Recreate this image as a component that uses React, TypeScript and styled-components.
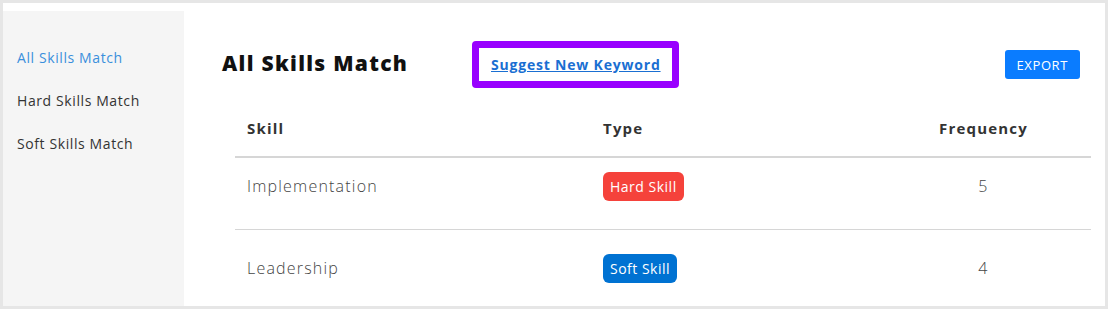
import React from 'react';
import styled, { createGlobalStyle } from 'styled-components';

const GlobalStyle = createGlobalStyle`
  html, body {
    margin: 0;
    padding: 0;
    background: #ffffff;
  }
  body {
    font-family: "Open Sans", "Liberation Sans", sans-serif;
    color: #333333;
  }
`;

const Frame = styled.div`
  box-sizing: border-box;
  width: 1108px;
  height: 309px;
  border: 3px solid #e6e6e6;
  padding-top: 8px;
  overflow: hidden;
  display: flex;
  background: #ffffff;
`;

const Sidebar = styled.nav`
  width: 181px;
  flex-shrink: 0;
  background: #f5f5f5;
  padding-top: 37px;
  display: flex;
  flex-direction: column;
  gap: 23px;
`;

const NavItem = styled.a<{ $active?: boolean }>`
  display: block;
  padding-left: 14px;
  font-size: 14px;
  line-height: 20px;
  letter-spacing: 0.6px;
  color: ${p => (p.$active ? '#3a8fdc' : '#333333')};
  text-decoration: none;
  cursor: pointer;
`;

const Main = styled.main`
  flex: 1;
  min-width: 0;
  padding: 30px 14px 0 38px;
  display: flex;
  flex-direction: column;
`;

const HeaderRow = styled.div`
  display: flex;
  align-items: center;
  height: 47px;
`;

const Title = styled.h2`
  margin: 0 0 4px;
  font-size: 21px;
  font-weight: 800;
  letter-spacing: 1.3px;
  color: #111111;
  width: 250px;
`;

const SuggestBox = styled.div`
  border: 7px solid #9900ff;
  border-radius: 4px;
  padding: 0 11px 0 12px;
  height: 33px;
  display: flex;
  align-items: center;
`;

const SuggestLink = styled.a`
  font-size: 14px;
  font-weight: 700;
  letter-spacing: 0.8px;
  color: #1a6fd2;
  text-decoration: underline;
  cursor: pointer;
`;

const ExportButton = styled.button`
  margin-left: auto;
  margin-right: 11px;
  height: 29px;
  padding: 0 12px;
  border: none;
  border-radius: 3px;
  background: #0a7cff;
  color: #ffffff;
  font-family: inherit;
  font-size: 13px;
  letter-spacing: 0.6px;
  cursor: pointer;
`;

const Table = styled.table`
  margin: 12px 0 0 0;
  width: 856px;
  align-self: flex-end;
  border-collapse: collapse;
  table-layout: fixed;
`;

const Th = styled.th<{ $w: number; $center?: boolean }>`
  box-sizing: border-box;
  width: ${p => p.$w}px;
  text-align: ${p => (p.$center ? 'center' : 'left')};
  padding: 18px 12px;
  font-size: 15px;
  line-height: 20px;
  font-weight: 700;
  letter-spacing: 1.2px;
  color: #333333;
  border-bottom: 2px solid #d6d6d6;
`;

const Tr = styled.tr<{ $first?: boolean }>`
  border-top: ${p => (p.$first ? 'none' : '1px solid #d6d6d6')};
  td {
    padding: ${p => (p.$first ? '14px' : '24px')} 12px 28px;
  }
`;

const Td = styled.td<{ $center?: boolean }>`
  text-align: ${p => (p.$center ? 'center' : 'left')};
  vertical-align: middle;
  font-size: 16px;
  font-weight: 300;
  line-height: 29px;
  letter-spacing: 1.2px;
  color: #444444;
`;

const Badge = styled.span<{ $kind: 'hard' | 'soft' }>`
  display: inline-block;
  height: 29px;
  line-height: 29px;
  padding: 0 7px;
  border-radius: 6px;
  font-size: 14px;
  font-weight: 400;
  letter-spacing: 0.5px;
  color: #ffffff;
  background: ${p => (p.$kind === 'hard' ? '#f5423b' : '#0072d2')};
`;

const rows = [
  { skill: 'Implementation', kind: 'hard' as const, label: 'Hard Skill', freq: 5 },
  { skill: 'Leadership', kind: 'soft' as const, label: 'Soft Skill', freq: 4 },
];

export default function App() {
  return (
    <>
      <GlobalStyle />
      <Frame>
        <Sidebar>
          <NavItem $active>All Skills Match</NavItem>
          <NavItem>Hard Skills Match</NavItem>
          <NavItem>Soft Skills Match</NavItem>
        </Sidebar>
        <Main>
          <HeaderRow>
            <Title>All Skills Match</Title>
            <SuggestBox>
              <SuggestLink>Suggest New Keyword</SuggestLink>
            </SuggestBox>
            <ExportButton>EXPORT</ExportButton>
          </HeaderRow>
          <Table>
            <thead>
              <tr>
                <Th $w={356}>Skill</Th>
                <Th $w={285}>Type</Th>
                <Th $w={215} $center>Frequency</Th>
              </tr>
            </thead>
            <tbody>
              {rows.map((r, i) => (
                <Tr key={r.skill} $first={i === 0}>
                  <Td>{r.skill}</Td>
                  <Td>
                    <Badge $kind={r.kind}>{r.label}</Badge>
                  </Td>
                  <Td $center>{r.freq}</Td>
                </Tr>
              ))}
            </tbody>
          </Table>
        </Main>
      </Frame>
    </>
  );
}
